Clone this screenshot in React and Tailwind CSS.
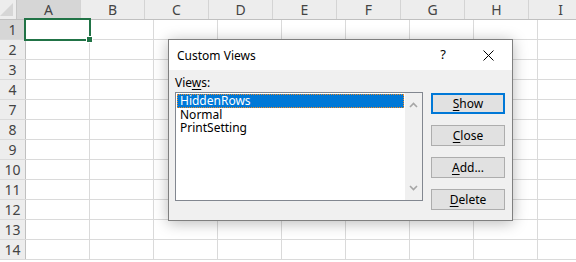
const cols = ['A', 'B', 'C', 'D', 'E', 'F', 'G', 'H', 'I'];
// rows 5 and 6 are hidden by the "HiddenRows" view
const rows = [1, 2, 3, 4, 7, 8, 9, 10, 11, 12, 13, 14];

function Corner() {
  return (
    <div className="w-[26px] h-full border-r border-[#c6c6c6] flex items-end justify-end pr-[3px] pb-[3px]">
      <svg width="13" height="13" viewBox="0 0 13 13">
        <polygon points="13,0 13,13 0,13" fill="#d6d6d6" />
      </svg>
    </div>
  );
}

function Grid() {
  return (
    <div className="flex flex-col">
      <div className="flex h-[20px] bg-[#ededed] border-b border-[#c0c0c0]">
        <Corner />
        {cols.map((c) => (
          <div
            key={c}
            className={
              'w-[64px] shrink-0 h-full border-r border-[#d4d4d4] flex items-center justify-center text-[14px] text-[#444] ' +
              (c === 'A' ? 'bg-[#d6d6d6]' : '')
            }
          >
            {c}
          </div>
        ))}
      </div>
      {rows.map((r) => (
        <div key={r} className="flex h-[20px] border-b border-[#dadada]">
          <div
            className={
              'w-[26px] shrink-0 h-full border-r border-[#c0c0c0] flex items-center justify-center text-[14px] text-[#444] ' +
              (r === 1 ? 'bg-[#d6d6d6]' : 'bg-[#ededed]')
            }
          >
            {r}
          </div>
          {cols.map((c) => (
            <div key={c} className="w-[64px] shrink-0 h-full border-r border-[#dadada] bg-white" />
          ))}
        </div>
      ))}
    </div>
  );
}

function Btn({ label, def }) {
  return (
    <div
      className={
        'h-[21px] w-[74px] bg-[#e1e1e1] flex items-center justify-center text-[12px] text-black ' +
        (def ? 'border-2 border-[#0078d7]' : 'border border-[#adadad]')
      }
    >
      <span>
        <span className="underline underline-offset-2">{label[0]}</span>
        {label.slice(1)}
      </span>
    </div>
  );
}

function Dialog() {
  return (
    <div className="absolute left-[168px] top-[39px] w-[345px] h-[182px] border border-[#7f7f7f] bg-[#f0f0f0] shadow-[0_2px_14px_rgba(0,0,0,0.28)] flex flex-col">
      <div className="h-[30px] bg-white flex items-center pl-[8px] text-[12px] text-black">
        <span className="flex-1 pt-[1px]">Custom Views</span>
        <span className="w-[20px] text-center text-[13px] mr-[30px]">?</span>
        <svg width="11" height="11" viewBox="0 0 11 11" className="mr-[18px]">
          <path d="M0.5 0.5 L10.5 10.5 M10.5 0.5 L0.5 10.5" stroke="#000" strokeWidth="1" />
        </svg>
      </div>
      <div className="flex px-[6px]">
        <div className="flex flex-col">
          <div className="h-[22px] flex items-end pb-[3px] text-[12px] text-black leading-none">
            <span>
              Vie<span className="underline underline-offset-2">w</span>s:
            </span>
          </div>
          <div className="w-[248px] h-[109px] border border-[#828790] bg-white flex">
            <div className="flex-1 p-[1px] text-[12px] leading-[13px] text-black">
              <div className="h-[14px] bg-[#0078d7] text-white border border-dotted border-[#f08a24] pl-[2px] leading-[12px]">
                HiddenRows
              </div>
              <div className="h-[13px] pl-[3px] leading-[13px]">Normal</div>
              <div className="h-[13px] pl-[3px] leading-[13px]">PrintSetting</div>
            </div>
            <div className="w-[17px] bg-[#f0f0f0] flex flex-col justify-between items-center py-[9px]">
              <svg width="9" height="6" viewBox="0 0 9 6">
                <path d="M1 5 L4.5 1.5 L8 5" stroke="#a6a6a6" strokeWidth="1.6" fill="none" />
              </svg>
              <svg width="9" height="6" viewBox="0 0 9 6">
                <path d="M1 1 L4.5 4.5 L8 1" stroke="#a6a6a6" strokeWidth="1.6" fill="none" />
              </svg>
            </div>
          </div>
        </div>
        <div className="ml-[8px] pt-[23px] flex flex-col gap-[11px]">
          <Btn label="Show" def />
          <Btn label="Close" />
          <Btn label="Add..." />
          <Btn label="Delete" />
        </div>
      </div>
    </div>
  );
}

export default function App() {
  return (
    <div
      className="relative w-[576px] h-[262px] overflow-hidden bg-white"
      style={{ fontFamily: '"Noto Sans", "Liberation Sans", sans-serif' }}
    >
      <Grid />
      <div className="absolute left-[24px] top-[18px] w-[67px] h-[23px] border-2 border-[#217346]" />
      <div className="absolute left-[86px] top-[36px] w-[7px] h-[7px] bg-[#217346] border border-white" />
      <Dialog />
    </div>
  );
}
